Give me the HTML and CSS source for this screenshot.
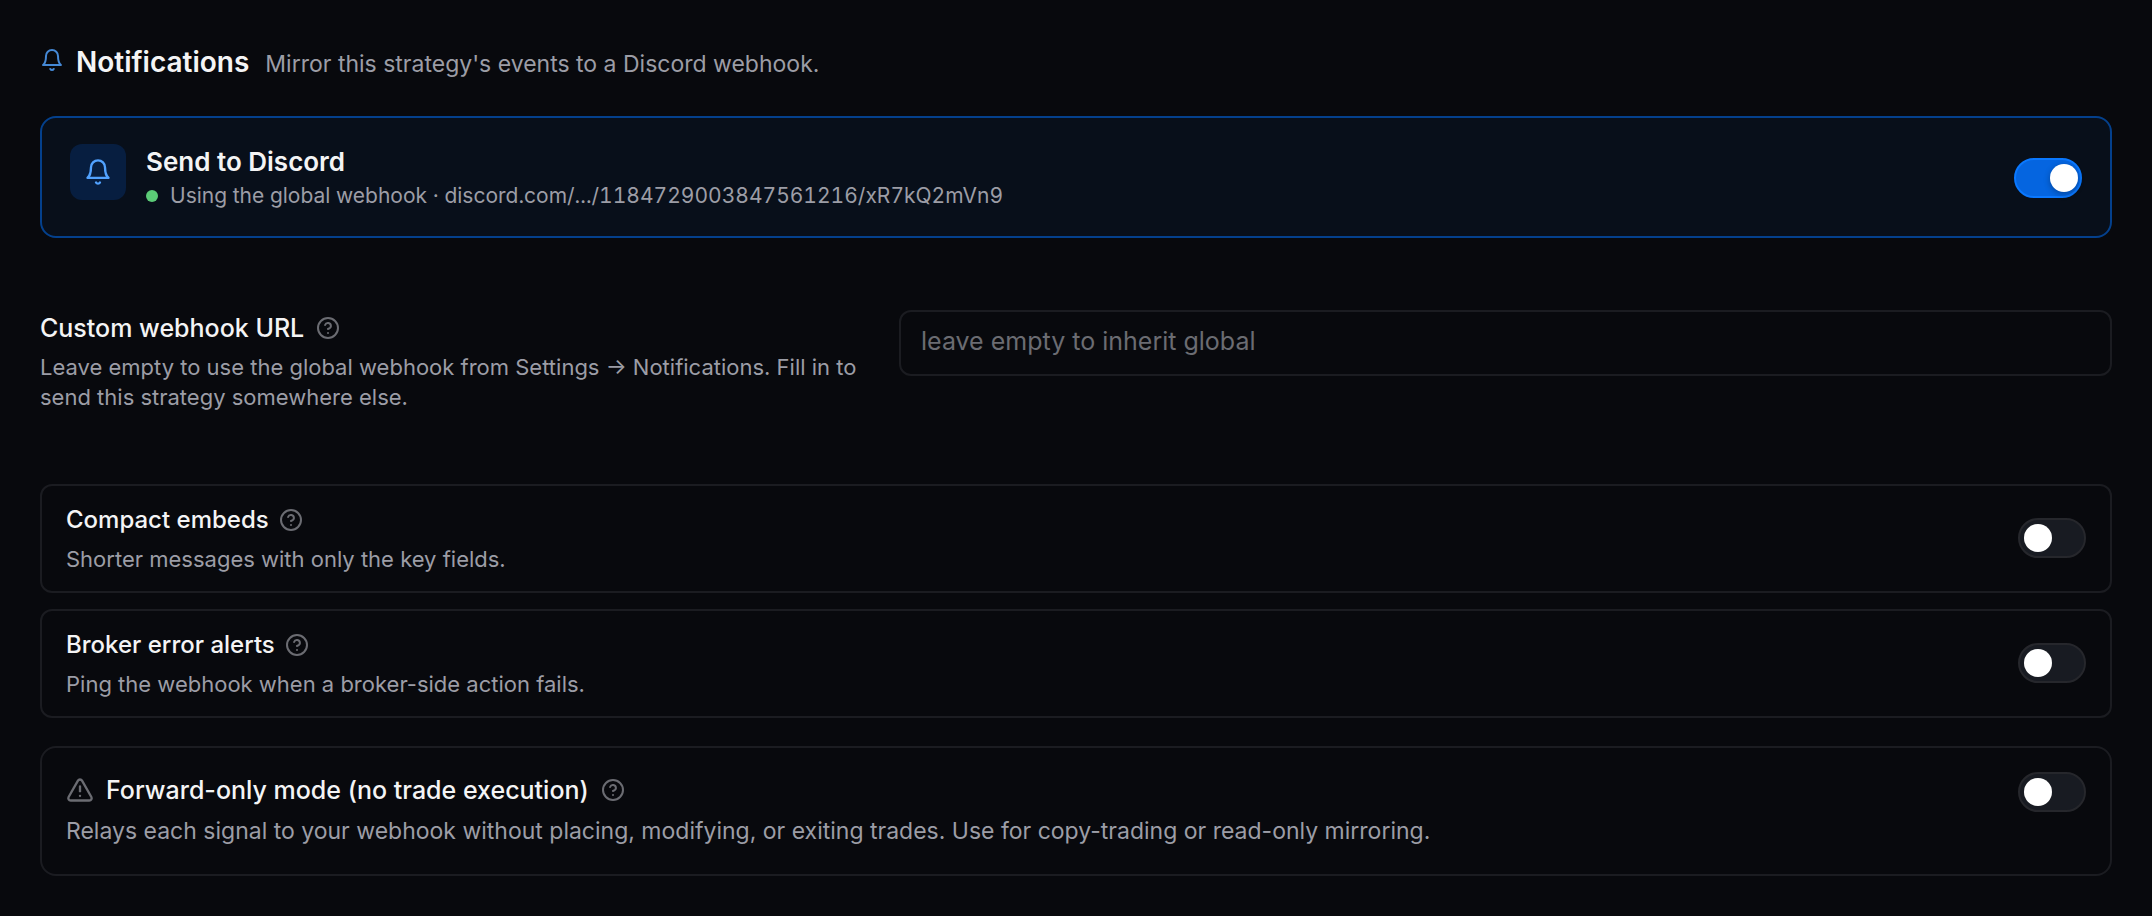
FILE: index.html
```html
<!DOCTYPE html>
<html lang="en">
<head>
    <meta charset="UTF-8">
    <meta name="viewport" content="width=device-width, initial-scale=1.0">
    <title>Notifications</title>
    <link rel="stylesheet" href="styles.css">
</head>
<body>
    <!-- shared icons -->
    <svg class="sprite" aria-hidden="true">
        <symbol id="bell" viewBox="0 0 24 24">
            <path d="M6 8a6 6 0 0 1 12 0c0 7 3 9 3 9H3s3-2 3-9"/>
            <path d="M10.3 21a1.94 1.94 0 0 0 3.4 0"/>
        </symbol>
        <symbol id="help" viewBox="0 0 24 24">
            <circle cx="12" cy="12" r="10"/>
            <path d="M9.09 9a3 3 0 0 1 5.83 1c0 2-3 3-3 3"/>
            <path d="M12 17h.01"/>
        </symbol>
        <symbol id="warning" viewBox="0 0 24 24">
            <path d="m21.73 18-8-14a2 2 0 0 0-3.48 0l-8 14A2 2 0 0 0 4 21h16a2 2 0 0 0 1.73-3"/>
            <path d="M12 9v4"/>
            <path d="M12 17h.01"/>
        </symbol>
    </svg>

    <main class="settings">
        <header class="heading">
            <svg class="icon heading-icon"><use href="#bell"/></svg>
            <h1>Notifications</h1>
            <p>Mirror this strategy's events to a Discord webhook.</p>
        </header>

        <section class="card discord">
            <span class="tile"><svg class="icon"><use href="#bell"/></svg></span>
            <div class="card-text">
                <label class="discord-title" for="discord">Send to Discord</label>
                <p class="status"><span class="dot"></span>Using the global webhook · discord.com/.../1184729003847561216/xR7kQ2mVn9</p>
            </div>
            <input type="checkbox" role="switch" class="switch" id="discord" checked>
        </section>

        <section class="field">
            <div>
                <div class="title-row">
                    <label for="webhook">Custom webhook URL</label>
                    <button type="button" class="help" aria-label="Help"><svg class="icon"><use href="#help"/></svg></button>
                </div>
                <p class="hint">Leave empty to use the global webhook from Settings → Notifications. Fill in to send this strategy somewhere else.</p>
            </div>
            <input type="text" class="textbox" id="webhook" placeholder="leave empty to inherit global">
        </section>

        <section class="options">
            <div class="card option">
                <div class="card-text">
                    <div class="title-row">
                        <label for="compact">Compact embeds</label>
                        <button type="button" class="help" aria-label="Help"><svg class="icon"><use href="#help"/></svg></button>
                    </div>
                    <p class="hint">Shorter messages with only the key fields.</p>
                </div>
                <input type="checkbox" role="switch" class="switch" id="compact">
            </div>
            <div class="card option">
                <div class="card-text">
                    <div class="title-row">
                        <label for="errors">Broker error alerts</label>
                        <button type="button" class="help" aria-label="Help"><svg class="icon"><use href="#help"/></svg></button>
                    </div>
                    <p class="hint">Ping the webhook when a broker-side action fails.</p>
                </div>
                <input type="checkbox" role="switch" class="switch" id="errors">
            </div>
        </section>

        <section class="card forward">
            <div class="card-text">
                <div class="title-row">
                    <svg class="icon warning"><use href="#warning"/></svg>
                    <label for="forward">Forward-only mode (no trade execution)</label>
                    <button type="button" class="help" aria-label="Help"><svg class="icon"><use href="#help"/></svg></button>
                </div>
                <p class="hint">Relays each signal to your webhook without placing, modifying, or exiting trades. Use for copy-trading or read-only mirroring.</p>
            </div>
            <input type="checkbox" role="switch" class="switch" id="forward">
        </section>
    </main>
</body>
</html>
```
FILE: styles.css
```css
* {
    box-sizing: border-box;
}

body {
    margin: 0;
    background-color: #08090d;
    color: #f4f4f5;
    font-family: Inter, "Liberation Sans", sans-serif;
    font-size: 25px;
}

h1, p {
    margin: 0;
}

.sprite {
    display: none;
}

.icon {
    display: block;
    width: 24px;
    height: 24px;
    fill: none;
    stroke: currentColor;
    stroke-width: 2;
    stroke-linecap: round;
    stroke-linejoin: round;
}

.settings {
    padding: 40px;
}

/* heading */
.heading {
    display: flex;
    align-items: baseline;
    gap: 12px;
    margin-bottom: 30px;
    line-height: 44px;
}

.heading-icon {
    color: #4589d6;
}

.heading h1 {
    font-size: 28px;
    font-weight: 600;
}

.heading p {
    padding-left: 4px;
    color: #9c9da6;
    font-size: 23px;
}

/* cards */
.card {
    display: flex;
    align-items: center;
    border: 2px solid #1b1c21;
    border-radius: 12px;
}

.card-text {
    flex: 1;
}

.discord {
    align-items: flex-start;
    gap: 20px;
    padding: 26px 28px 24px;
    border-color: #04408c;
    border-radius: 16px;
    background-color: #080f1a;
}

.discord .switch {
    align-self: center;
}

.tile {
    display: grid;
    place-items: center;
    width: 56px;
    height: 56px;
    border-radius: 12px;
    background-color: #071e40;
    color: #51a2ff;
}

.tile .icon {
    width: 28px;
    height: 28px;
}

.discord-title {
    display: block;
    font-size: 26px;
    font-weight: 600;
    line-height: 36px;
}

.status {
    display: flex;
    align-items: center;
    gap: 12px;
    color: #9c9da6;
    font-size: 21px;
    font-variant-numeric: tabular-nums;
    line-height: 32px;
}

.dot {
    width: 12px;
    height: 12px;
    border-radius: 50%;
    background-color: #5bcb77;
}

/* label, help icon and hint */
.title-row {
    display: flex;
    align-items: center;
    gap: 12px;
    font-weight: 500;
    line-height: 36px;
}

.help {
    padding: 0;
    border: 0;
    background: none;
    color: #6b6c72;
}

.hint {
    margin-top: 6px;
    color: #9c9da6;
    font-size: 22px;
    line-height: 30px;
}

/* webhook field */
.field {
    display: grid;
    grid-template-columns: 15fr 22fr;
    align-items: start;
    gap: 32px;
    margin: 72px 0;
}

.textbox {
    width: 100%;
    height: 66px;
    padding: 0 20px 4px;
    border: 2px solid #1b1c21;
    border-radius: 12px;
    background: none;
    color: #f4f4f5;
    font: inherit;
}

.textbox::placeholder {
    color: #6b6c72;
    opacity: 1;
}

/* toggles */
.options {
    display: grid;
    gap: 16px;
    margin-bottom: 28px;
}

.option {
    padding: 16px 24px 17px;
}

.option .title-row {
    gap: 10px;
    font-size: 24px;
}

.forward {
    align-items: flex-start;
    padding: 24px 24px 28px;
    border-radius: 16px;
}

.forward .hint {
    margin-top: 8px;
    font-size: 23px;
}

.warning {
    width: 28px;
    height: 28px;
    color: #6b6c72;
}

.switch {
    appearance: none;
    display: flex;
    align-items: center;
    width: 68px;
    height: 40px;
    margin: 0;
    padding: 0 4px;
    border: 2px solid #26272c;
    border-radius: 20px;
    background-color: #181b22;
}

.switch::before {
    content: "";
    width: 28px;
    height: 28px;
    border-radius: 50%;
    background-color: #fff;
}

.switch:checked {
    justify-content: flex-end;
    padding: 0 2px;
    border-color: #0a78ff;
    background-color: #0565e0;
}

.switch:checked::before {
    box-shadow: 0 2px 6px rgba(0, 0, 0, 0.3);
}
```
